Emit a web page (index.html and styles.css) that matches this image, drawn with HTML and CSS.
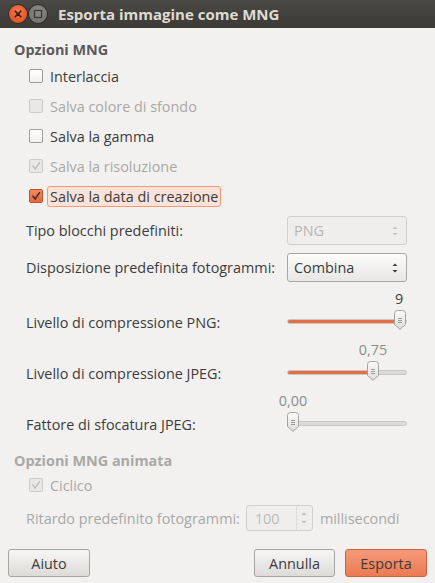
FILE: index.html
```html
<!DOCTYPE html>
<html lang="it">
<head>
<meta charset="utf-8">
<title>Esporta immagine come MNG</title>
<link rel="stylesheet" href="styles.css">
</head>
<body>
<div class="window">
  <div class="titlebar">
    <span class="wbtn close"><svg width="18" height="18" viewBox="0 0 18 18"><path d="M6.2 6.2 L11.8 11.8 M11.8 6.2 L6.2 11.8" stroke="#3b1a0e" stroke-width="1.6" stroke-linecap="round"/></svg></span>
    <span class="wbtn max"><svg width="18" height="18" viewBox="0 0 18 18"><rect x="5.5" y="5.5" width="7" height="7" fill="none" stroke="#3a3a38" stroke-width="1.3"/></svg></span>
    <span class="title">Esporta immagine come MNG</span>
  </div>

  <div class="content">
    <div class="hdr">Opzioni MNG</div>

    <div class="check"><span class="box"></span><span class="clabel">Interlaccia</span></div>
    <div class="check disabled"><span class="box"></span><span class="clabel">Salva colore di sfondo</span></div>
    <div class="check"><span class="box"></span><span class="clabel">Salva la gamma</span></div>
    <div class="check disabled"><span class="box checked"><svg width="14" height="14" viewBox="0 0 14 14"><path d="M3 6.5 L6 10.5 L11.5 2.5" fill="none" stroke="#bcbcbc" stroke-width="1.6"/></svg></span><span class="clabel">Salva la risoluzione</span></div>
    <div class="check"><span class="box checked on"><svg width="14" height="14" viewBox="0 0 14 14"><path d="M3 6.5 L6 10.5 L11.5 2.5" fill="none" stroke="#3a2a22" stroke-width="1.7"/></svg></span><span class="clabel focus">Salva la data di creazione</span></div>

    <div class="row combo-row">
      <span class="rlabel">Tipo blocchi predefiniti:</span>
      <span class="combo disabled"><span class="ctext">PNG</span><span class="carrows"><svg width="8" height="14" viewBox="0 0 8 14"><path d="M1.5 5 L4 2.5 L6.5 5 Z M1.5 9 L4 11.5 L6.5 9 Z" fill="#c4c2bf"/></svg></span></span>
    </div>
    <div class="row combo-row">
      <span class="rlabel">Disposizione predefinita fotogrammi:</span>
      <span class="combo"><span class="ctext">Combina</span><span class="carrows"><svg width="8" height="14" viewBox="0 0 8 14"><path d="M1.5 5 L4 2.5 L6.5 5 Z M1.5 9 L4 11.5 L6.5 9 Z" fill="#3c3c3c"/></svg></span></span>
    </div>

    <div class="row slider-row">
      <span class="rlabel">Livello di compressione PNG:</span>
      <div class="slider">
        <div class="value dark"><span class="vtext" style="left: 112px">9</span></div>
        <div class="track-area">
          <div class="track"><div class="fill" style="width: 113px"></div></div>
          <svg class="handle" style="left: 107px" width="12" height="20" viewBox="0 0 12 20"><defs><linearGradient id="hg1" x1="0" y1="0" x2="0" y2="1"><stop offset="0" stop-color="#fbfbfb"/><stop offset="1" stop-color="#dedcd9"/></linearGradient></defs><path d="M0.5 3.5 Q0.5 0.5 3.5 0.5 H8.5 Q11.5 0.5 11.5 3.5 V14.5 L6 19.3 L0.5 14.5 Z" fill="url(#hg1)" stroke="#a5a39f"/><path d="M4 8.5 H8 M4 10.5 H8 M4 12.5 H8" stroke="#9d9b97" stroke-width="1"/></svg>
        </div>
      </div>
    </div>
    <div class="row slider-row">
      <span class="rlabel">Livello di compressione JPEG:</span>
      <div class="slider">
        <div class="value"><span class="vtext" style="left: 86px">0,75</span></div>
        <div class="track-area">
          <div class="track"><div class="fill" style="width: 86px"></div></div>
          <svg class="handle" style="left: 80px" width="12" height="20" viewBox="0 0 12 20"><defs><linearGradient id="hg2" x1="0" y1="0" x2="0" y2="1"><stop offset="0" stop-color="#fbfbfb"/><stop offset="1" stop-color="#dedcd9"/></linearGradient></defs><path d="M0.5 3.5 Q0.5 0.5 3.5 0.5 H8.5 Q11.5 0.5 11.5 3.5 V14.5 L6 19.3 L0.5 14.5 Z" fill="url(#hg2)" stroke="#a5a39f"/><path d="M4 8.5 H8 M4 10.5 H8 M4 12.5 H8" stroke="#9d9b97" stroke-width="1"/></svg>
        </div>
      </div>
    </div>
    <div class="row slider-row">
      <span class="rlabel">Fattore di sfocatura JPEG:</span>
      <div class="slider">
        <div class="value"><span class="vtext" style="left: 6px">0,00</span></div>
        <div class="track-area">
          <div class="track"></div>
          <svg class="handle" style="left: 0px" width="12" height="20" viewBox="0 0 12 20"><defs><linearGradient id="hg3" x1="0" y1="0" x2="0" y2="1"><stop offset="0" stop-color="#fbfbfb"/><stop offset="1" stop-color="#dedcd9"/></linearGradient></defs><path d="M0.5 3.5 Q0.5 0.5 3.5 0.5 H8.5 Q11.5 0.5 11.5 3.5 V14.5 L6 19.3 L0.5 14.5 Z" fill="url(#hg3)" stroke="#a5a39f"/><path d="M4 8.5 H8 M4 10.5 H8 M4 12.5 H8" stroke="#9d9b97" stroke-width="1"/></svg>
        </div>
      </div>
    </div>

    <div class="hdr hdr2 disabled">Opzioni MNG animata</div>
    <div class="check disabled"><span class="box checked"><svg width="14" height="14" viewBox="0 0 14 14"><path d="M3 6.5 L6 10.5 L11.5 2.5" fill="none" stroke="#bcbcbc" stroke-width="1.6"/></svg></span><span class="clabel">Ciclico</span></div>
    <div class="spin-row disabled">
      <span class="slabel">Ritardo predefinito fotogrammi:</span>
      <span class="spin"><span class="stext">100</span><span class="sarrows"><svg width="10" height="24" viewBox="0 0 10 24"><path d="M2.5 9 L5 6.5 L7.5 9 Z M2.5 15 L5 17.5 L7.5 15 Z" fill="#bdbbb8"/></svg></span></span>
      <span class="unit">millisecondi</span>
    </div>
  </div>

  <div class="buttons">
    <span class="btn help">Aiuto</span>
    <span class="spacer"></span>
    <span class="btn cancel">Annulla</span>
    <span class="btn primary">Esporta</span>
  </div>
</div>
</body>
</html>
```

FILE: styles.css
```css
* { box-sizing: border-box; }
html, body { margin: 0; padding: 0; }
body {
  width: 435px;
  height: 583px;
  background: #f2f1f0;
  font-family: "Open Sans", "DejaVu Sans", sans-serif;
  font-size: 14.4px;
  color: #3c3c3c;
  overflow: hidden;
}
.window { width: 435px; height: 583px; display: flex; flex-direction: column; }

.titlebar {
  height: 28px;
  flex: none;
  background: linear-gradient(#4a4945, #3c3b37);
  display: flex;
  align-items: center;
  padding-left: 9px;
}
.wbtn {
  width: 18px; height: 18px; border-radius: 50%;
  display: flex; align-items: center; justify-content: center;
  margin-right: 1px;
}
.wbtn.close { background: radial-gradient(circle at 50% 35%, #f4774c, #dd4a1c); box-shadow: 0 0 0 1px #2f2e2b; }
.wbtn.max { background: radial-gradient(circle at 50% 35%, #8c8b86, #6e6d68); box-shadow: 0 0 0 1px #2f2e2b; margin-left: 1px; }
.title {
  margin-left: 10px;
  color: #dfdbd2;
  font-weight: bold;
  font-size: 15px;
}

.content { display: flex; flex-direction: column; padding-left: 14px; }
.hdr {
  height: 18px; line-height: 18px;
  margin-top: 13px; margin-bottom: 2px;
  font-weight: bold; color: #5a5a5a;
}
.hdr2 { margin-top: 16px; margin-bottom: 0; }
.hdr.disabled { color: #a9a8a6; }

.check { height: 30px; display: flex; align-items: center; padding-left: 15px; }
.box {
  width: 14px; height: 14px; flex: none;
  border: 1px solid #9e9c98; border-radius: 2px;
  background: linear-gradient(#ffffff, #f1f0ef);
  display: flex; align-items: center; justify-content: center;
}
.box svg { display: block; }
.check.disabled .box { border-color: #cdcbc8; background: #e9e8e6; }
.box.on { border-color: #b8552f; background: linear-gradient(#f38a62, #e2683e); }
.clabel {
  margin-left: 4px;
  height: 21px; line-height: 19px;
  padding: 0 2px;
  border: 1px solid transparent;
  border-radius: 3px;
}
.check.disabled .clabel { color: #a9a8a6; }
.clabel.focus { border-color: #f09a76; background: #f7e3da; }

.row { display: flex; align-items: center; padding-left: 12px; padding-right: 28px; }
.rlabel { flex: 1; white-space: nowrap; }
.combo-row { height: 29px; margin-top: 5px; }
.combo-row + .combo-row { margin-top: 8px; }
.combo {
  width: 120px; height: 29px; flex: none;
  border: 1px solid #a9a6a1; border-radius: 3px;
  background: linear-gradient(#fbfbfa, #e8e7e5);
  display: flex; align-items: center;
  padding-left: 6px; padding-right: 7px;
}
.combo .ctext { flex: 1; }
.combo .carrows { display: flex; }
.combo.disabled { border-color: #d1cfcb; background: #efeeec; }
.combo.disabled .ctext { color: #b6b5b3; }

.slider-row { height: 44px; align-items: flex-end; }
.combo-row + .slider-row { margin-top: 8px; }
.slider-row + .slider-row { margin-top: 7px; }
.slider-row .rlabel { line-height: 18px; margin-bottom: 2px; }
.slider { width: 120px; flex: none; display: flex; flex-direction: column; }
.value { height: 18px; position: relative; color: #8e8d8a; }
.value.dark { color: #3c3c3c; }
.vtext { position: absolute; top: 0; line-height: 18px; transform: translateX(-50%); }
.track-area { height: 26px; position: relative; display: flex; align-items: center; }
.track {
  width: 120px; height: 5px;
  border-radius: 3px;
  background: #dcdbd9;
  border: 1px solid #c9c7c4;
  overflow: hidden;
  display: flex;
}
.fill { height: 100%; background: #e86d42; }
.handle { position: absolute; top: 2px; }

.spin-row { height: 26px; margin-top: 5px; display: flex; align-items: center; padding-left: 12px; white-space: nowrap; }
.slabel, .unit { color: #a9a8a6; }
.spin {
  margin-left: 6px;
  width: 67px; height: 26px; flex: none;
  border: 1px solid #d1cfcb; border-radius: 3px;
  background: #efeeec;
  display: flex; align-items: center;
}
.stext { flex: 1; padding-left: 8px; color: #bbbab8; }
.sarrows { width: 16px; height: 24px; border-left: 1px solid #dddbd8; display: flex; align-items: center; justify-content: center; }
.unit { margin-left: 7px; }

.buttons {
  display: flex; align-items: center;
  margin-top: 18px;
  padding: 0 8px;
}
.spacer { flex: 1; }
.btn {
  width: 82px; height: 28px;
  border: 1px solid #a7a5a1; border-radius: 3px;
  background: linear-gradient(#f6f6f5, #dcdbd8);
  display: flex; align-items: center; justify-content: center;
}
.btn.cancel { width: 81px; margin-right: 10px; }
.btn.primary { border-color: #c9643f; background: linear-gradient(#f69a7a, #ec7a53); }
```
